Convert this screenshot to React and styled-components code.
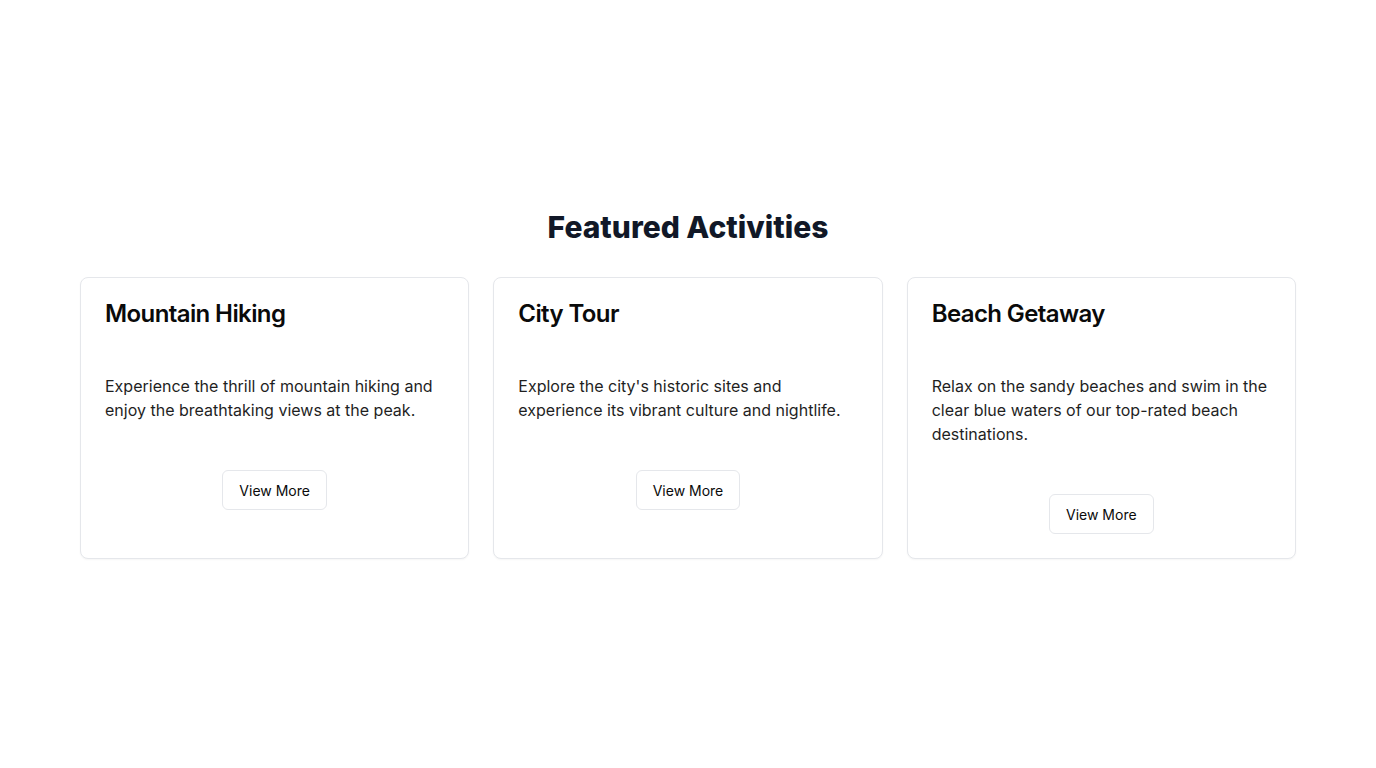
import React from 'react'
import styled, { createGlobalStyle } from 'styled-components'

const GlobalStyle = createGlobalStyle`
  * { box-sizing: border-box; }
  body {
    margin: 0;
    background: #ffffff;
    font-family: Inter, "Noto Sans", sans-serif;
    color: #0a0a0a;
  }
`

const activities = [
	{
		title: 'Mountain Hiking',
		text: 'Experience the thrill of mountain hiking and enjoy the breathtaking views at the peak.',
	},
	{
		title: 'City Tour',
		text: "Explore the city's historic sites and experience its vibrant culture and nightlife.",
	},
	{
		title: 'Beach Getaway',
		text: 'Relax on the sandy beaches and swim in the clear blue waters of our top-rated beach destinations.',
	},
]

const App = () => {
	return (
		<>
			<GlobalStyle />
			<Page>
				<Section>
					<Heading>Featured Activities</Heading>
					<Grid>
						{activities.map((a) => (
							<Card key={a.title}>
								<CardHeader>
									<CardTitle>{a.title}</CardTitle>
								</CardHeader>
								<CardContent>
									<Description>{a.text}</Description>
								</CardContent>
								<CardFooter>
									<Button type="button">View More</Button>
								</CardFooter>
							</Card>
						))}
					</Grid>
				</Section>
			</Page>
		</>
	)
}

const Page = styled.main`
    min-height: 100vh;
    display: flex;
    align-items: center;
    justify-content: center;
`
const Section = styled.section`
    width: 100%;
    max-width: 1280px;
    padding: 0 32px;
`
const Heading = styled.h2`
    margin: 0 0 32px;
    text-align: center;
    font-size: 30px;
    line-height: 36px;
    font-weight: 800;
    color: #111827;
`
const Grid = styled.div`
    display: grid;
    grid-template-columns: repeat(3, 1fr);
    gap: 24px;
`
const Card = styled.div`
    border: 1px solid #e5e7eb;
    border-radius: 8px;
    background: #fff;
    box-shadow: 0 1px 2px rgba(0, 0, 0, 0.04);
`
const CardHeader = styled.div`
    padding: 24px;
`
const CardTitle = styled.h3`
    margin: 0;
    font-size: 24px;
    line-height: 24px;
    font-weight: 600;
    letter-spacing: -0.6px;
    color: #0a0a0a;
`
const CardContent = styled.div`
    padding: 24px;
`
const Description = styled.p`
    margin: 0;
    font-size: 16px;
    line-height: 24px;
    color: #1f1f1f;
`
const CardFooter = styled.div`
    padding: 24px;
    display: flex;
    justify-content: center;
`
const Button = styled.button`
    height: 40px;
    padding: 0 16px;
    border: 1px solid #e5e7eb;
    border-radius: 6px;
    background: #fff;
    font-family: inherit;
    font-size: 14px;
    font-weight: 400;
    color: #0a0a0a;
    cursor: pointer;
`

export default App
